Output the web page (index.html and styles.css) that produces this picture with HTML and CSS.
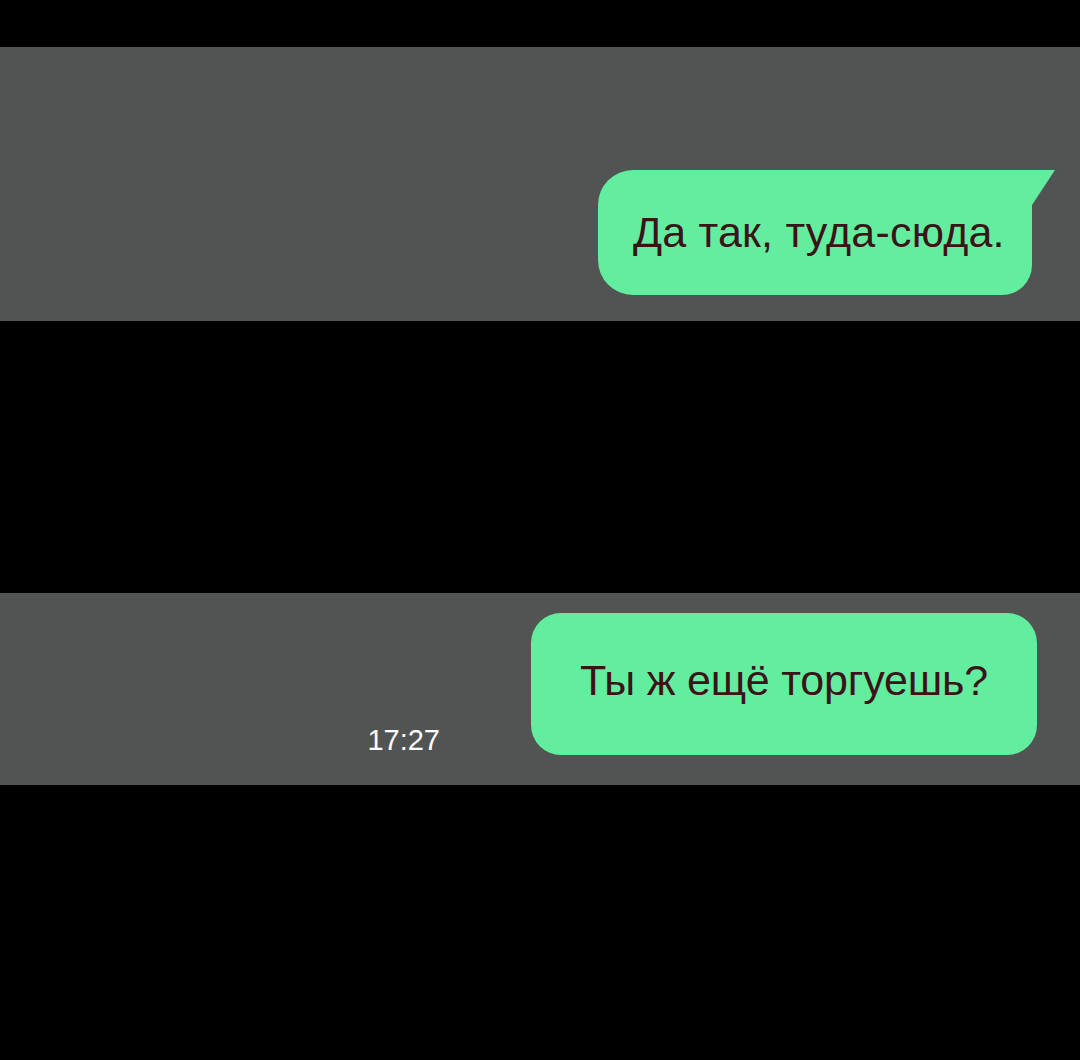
FILE: index.html
```html
<!DOCTYPE html>
<html lang="ru">
<head>
    <meta charset="UTF-8">
    <meta name="viewport" content="width=device-width, initial-scale=1.0">
    <title>Чат</title>
    <link rel="stylesheet" href="styles.css">
</head>
<body>
    <main class="chat">
        <!-- First message -->
        <section class="band band-first">
            <div class="bubble bubble-tail">Да так, туда-сюда.</div>
        </section>

        <div class="gap"></div>

        <!-- Second message -->
        <section class="band band-second">
            <span class="time">17:27</span>
            <div class="bubble bubble-plain">Ты ж ещё торгуешь?</div>
        </section>
    </main>
</body>
</html>
```

FILE: styles.css
```css
/* General Styles */
body {
    margin: 0;
    padding: 0;
    background: #000;
    font-family: "Liberation Sans", Arial, sans-serif;
    width: 1080px;
    height: 1060px;
    overflow: hidden;
}

.chat {
    padding-top: 47px;
}

.band {
    background: #525453;
    display: flex;
    justify-content: flex-end;
}

.band-first {
    height: 274px;
    padding: 123px 48px 0 0;
    box-sizing: border-box;
    align-items: flex-start;
}

.gap {
    height: 272px;
}

.band-second {
    height: 192px;
    padding: 20px 43px 0 0;
    box-sizing: border-box;
    align-items: flex-start;
    gap: 91px;
}

.bubble {
    background: #63ee9f;
    color: #3a1419;
    font-size: 43px;
    display: flex;
    align-items: center;
    box-sizing: border-box;
    white-space: nowrap;
}

.bubble-tail {
    position: relative;
    width: 434px;
    height: 125px;
    padding: 0 0 0 35px;
    border-radius: 35px 0 30px 35px;
    letter-spacing: 0.2px;
}

/* little tail at the top right corner */
.bubble-tail::after {
    content: "";
    position: absolute;
    top: 0;
    right: -23px;
    width: 23px;
    height: 35px;
    background: #63ee9f;
    clip-path: polygon(0 0, 100% 0, 0 100%);
}

.bubble-plain {
    width: 506px;
    height: 142px;
    padding: 0 0 8px 49px;
    border-radius: 30px;
    letter-spacing: -0.2px;
}

.time {
    color: #fff;
    font-size: 29px;
    line-height: 29px;
    margin-top: 113px;
}
```
